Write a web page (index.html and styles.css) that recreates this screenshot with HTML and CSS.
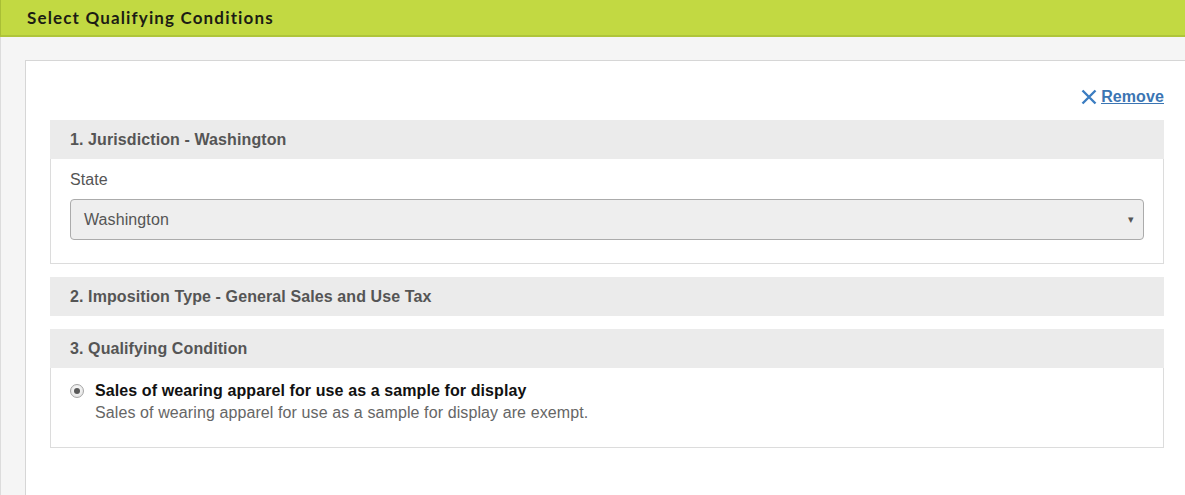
FILE: index.html
```html
<!DOCTYPE html>
<html>
<head>
<meta charset="utf-8">
<link rel="stylesheet" href="styles.css">
</head>
<body>
<header class="topbar">
  <h1 class="topbar-title">Select Qualifying Conditions</h1>
</header>
<main class="page">
  <section class="card">
    <div class="actions">
      <a class="remove" href="#">
        <svg class="remove-icon" width="16" height="16" viewBox="0 0 16 16"><path d="M1.5 1.5 L14.5 14.5 M14.5 1.5 L1.5 14.5" stroke="#3b7dc1" stroke-width="2.4" stroke-linecap="butt" fill="none"/></svg>
        <span class="remove-text">Remove</span>
      </a>
    </div>

    <div class="panel">
      <div class="panel-head">1. Jurisdiction - Washington</div>
      <div class="panel-body">
        <div class="field-label">State</div>
        <div class="select">
          <span>Washington</span>
          <span class="caret">&#9662;</span>
        </div>
      </div>
    </div>

    <div class="panel">
      <div class="panel-head">2. Imposition Type - General Sales and Use Tax</div>
    </div>

    <div class="panel">
      <div class="panel-head">3. Qualifying Condition</div>
      <div class="panel-body panel-body-cond">
        <div class="option">
          <span class="radio"><span class="radio-dot"></span></span>
          <div class="option-text">
            <div class="option-title">Sales of wearing apparel for use as a sample for display</div>
            <div class="option-desc">Sales of wearing apparel for use as a sample for display are exempt.</div>
          </div>
        </div>
      </div>
    </div>
  </section>
</main>
</body>
</html>
```

FILE: styles.css
```css
html, body {
  margin: 0;
  padding: 0;
  height: 100%;
}
body {
  font-family: "Liberation Sans", Arial, sans-serif;
  letter-spacing: 0.1px;
  background: #f5f5f5;
  overflow: hidden;
  display: flex;
  flex-direction: column;
}
.topbar {
  flex: none;
  height: 35px;
  background: #c2d942;
  border-bottom: 2px solid #afc53a;
  border-left: 1px solid #a9bf35;
  display: flex;
  align-items: center;
  padding-left: 26px;
}
.topbar-title {
  margin: 0;
  font-family: Lato, "Open Sans", sans-serif;
  font-weight: 700;
  font-size: 17px;
  letter-spacing: 1.15px;
  color: #1c1c14;
}
.page {
  flex: 1;
  min-height: 0;
  display: flex;
  flex-direction: column;
  border-left: 1px solid #dcdcdc;
  padding: 23px 0 0 24px;
}
.card {
  flex: 1;
  background: #fff;
  border: 1px solid #d6d6d6;
  border-right: none;
  border-bottom: none;
  margin-right: -4px;
  padding: 26px 25px 0 24px;
}
.actions {
  display: flex;
  justify-content: flex-end;
  height: 20px;
  margin-bottom: 13px;
}
.remove {
  display: flex;
  align-items: center;
  gap: 4px;
  color: #3b75b3;
  font-weight: 700;
  font-size: 16px;
  line-height: 20px;
}
.remove-icon {
  display: block;
}
.remove-text {
  text-decoration: underline;
}
.panel {
  margin-bottom: 13px;
}
.panel-head {
  background: #ebebeb;
  height: 39px;
  line-height: 39px;
  padding: 0 20px;
  font-weight: 700;
  font-size: 16px;
  color: #555;
}
.panel-body {
  border: 1px solid #dcdcdc;
  border-top: none;
  padding: 11px 19px 23px 19px;
}
.field-label {
  font-size: 16px;
  line-height: 20px;
  color: #555;
  margin-bottom: 9px;
}
.select {
  height: 39px;
  border: 1px solid #ababab;
  border-radius: 4px;
  background: #eeeeee;
  display: flex;
  align-items: center;
  justify-content: space-between;
  padding: 0 9px 0 13px;
  font-size: 16px;
  color: #555;
}
.caret {
  font-size: 11px;
  color: #555;
}
.panel-body-cond {
  padding: 12px 19px 23px 19px;
}
.option {
  display: flex;
  align-items: flex-start;
  gap: 11px;
}
.radio {
  margin-top: 4px;
  width: 12px;
  height: 12px;
  flex: none;
  border: 1px solid #a5a5a5;
  border-radius: 50%;
  background: radial-gradient(circle at 50% 40%, #ffffff, #dcdcdc);
  display: flex;
  align-items: center;
  justify-content: center;
}
.radio-dot {
  width: 6px;
  height: 6px;
  border-radius: 50%;
  background: #595959;
}
.option-title {
  font-weight: 700;
  font-size: 16px;
  line-height: 22px;
  color: #111;
}
.option-desc {
  font-size: 16px;
  line-height: 22px;
  color: #666;
}
```
